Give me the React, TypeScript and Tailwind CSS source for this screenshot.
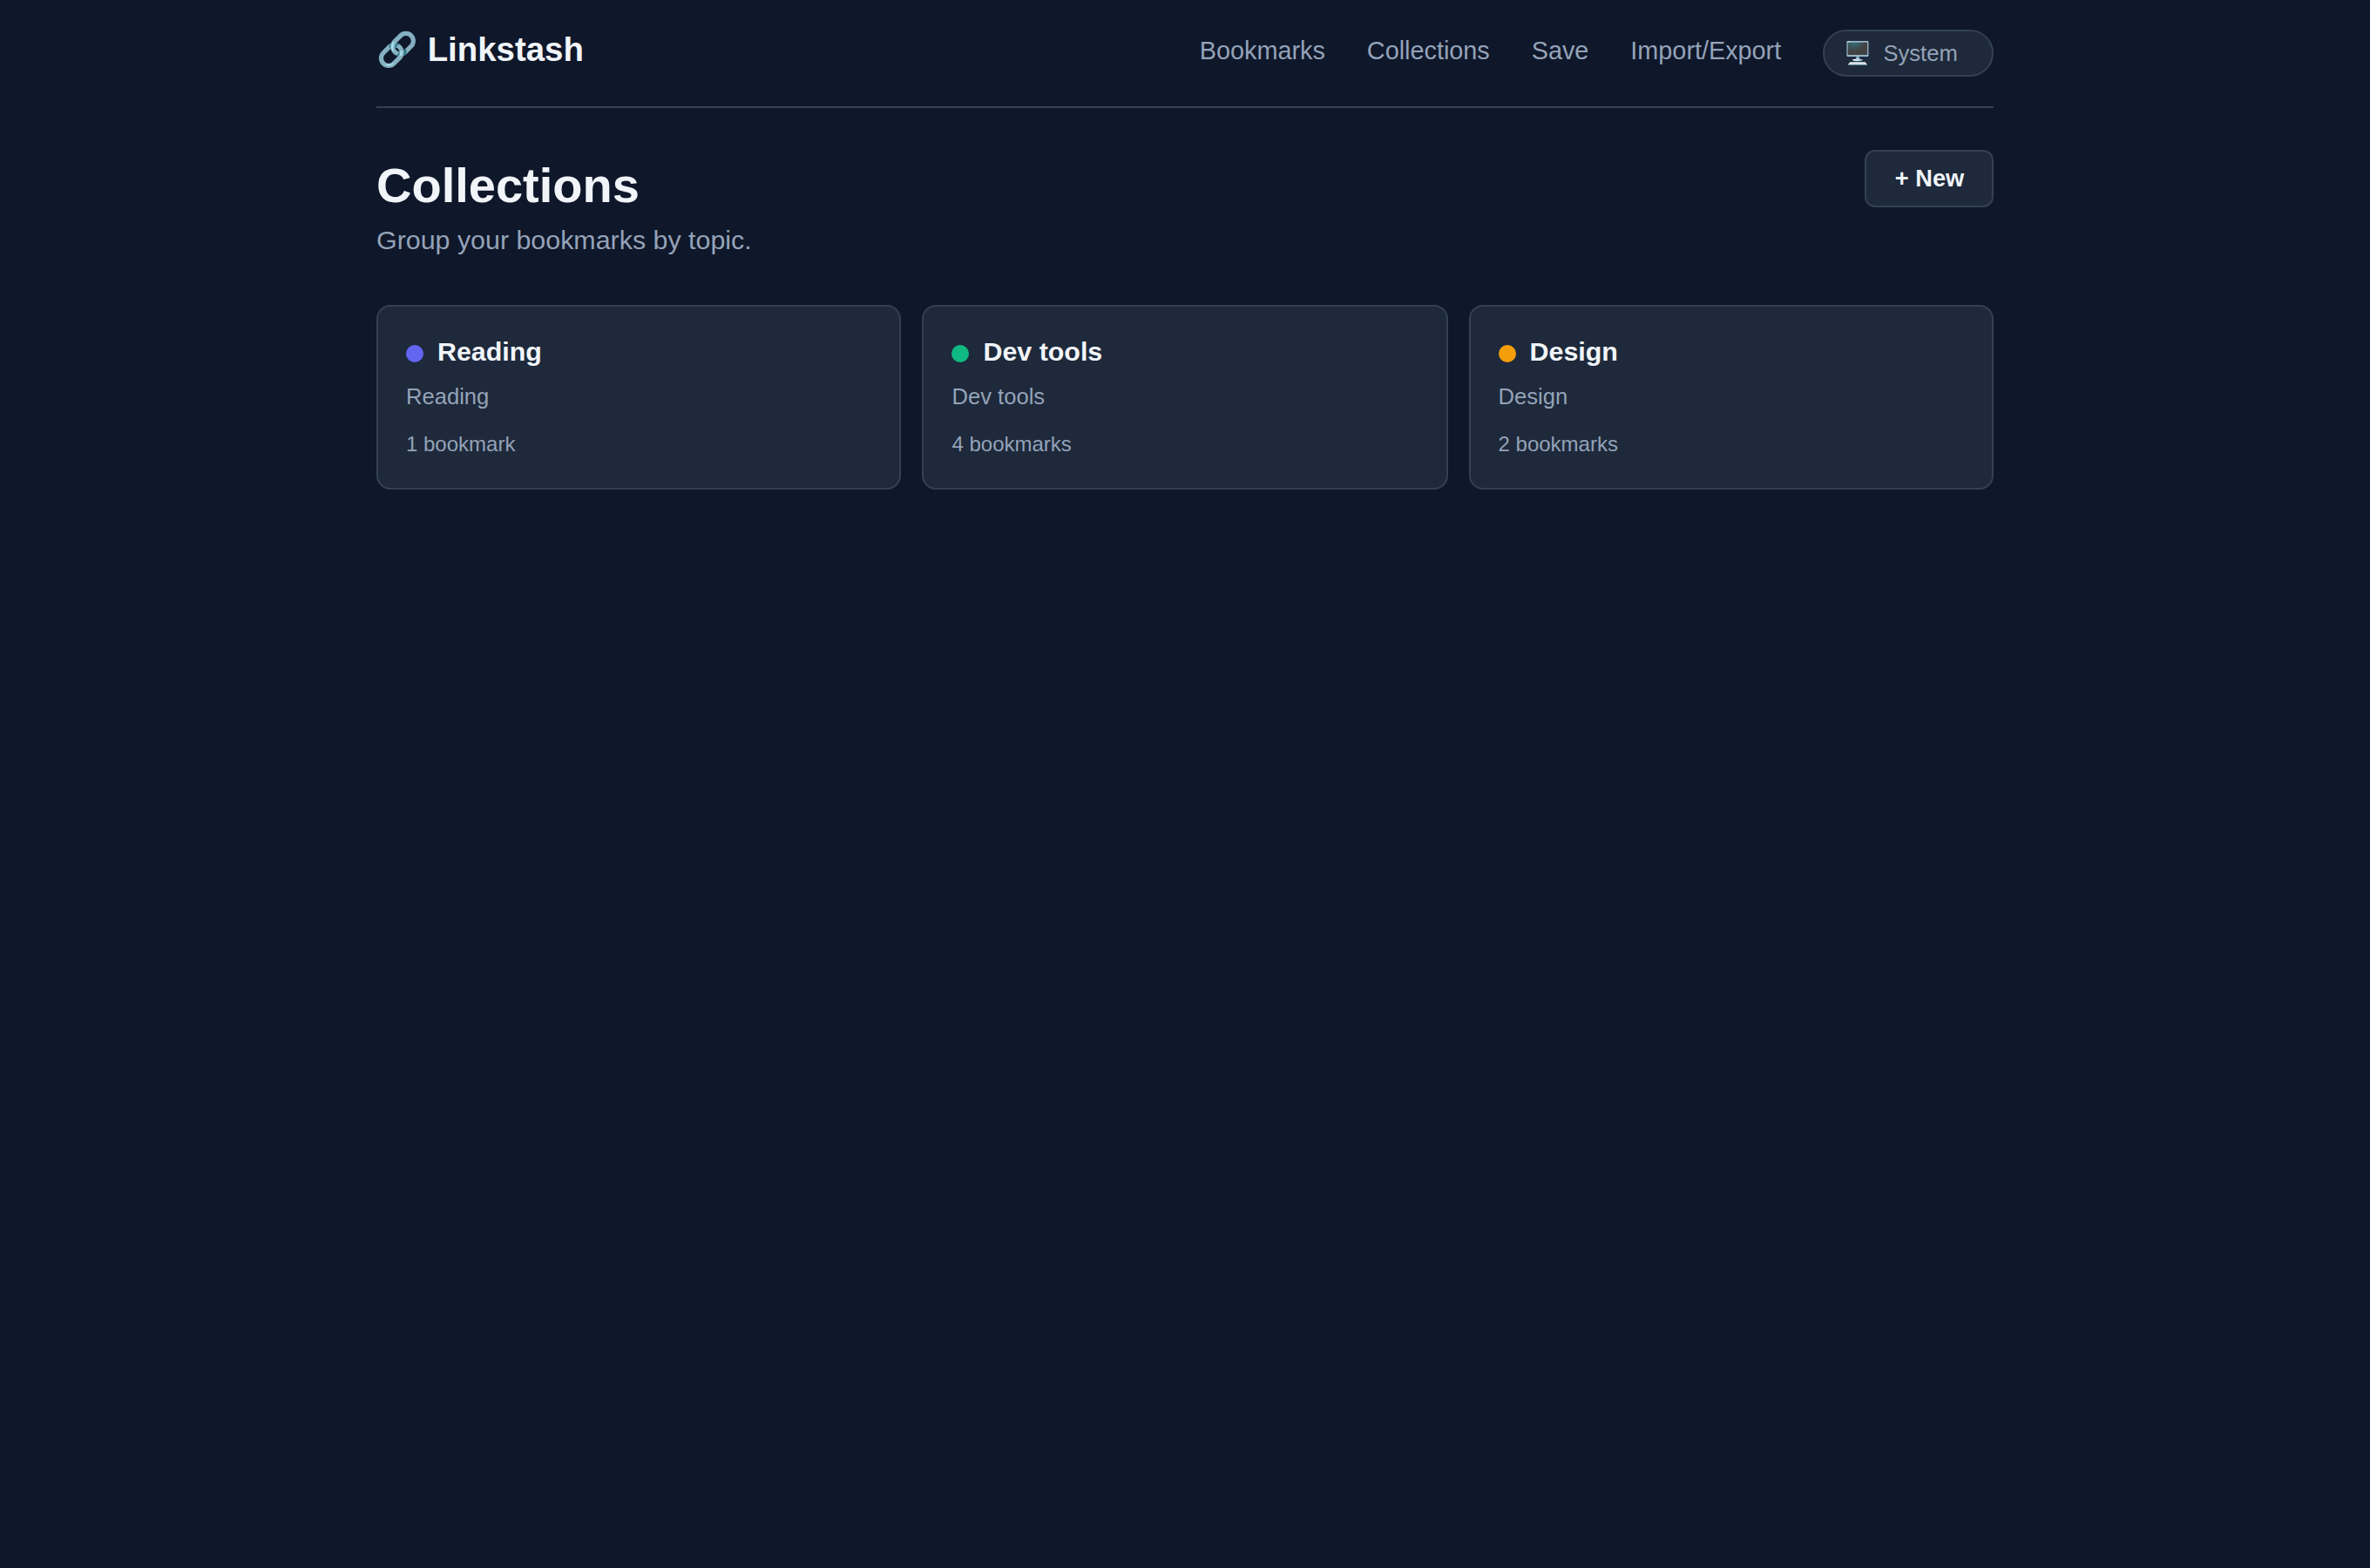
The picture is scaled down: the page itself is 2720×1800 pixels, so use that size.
const links = ["Bookmarks", "Collections", "Save", "Import/Export"];

const collections = [
  { name: "Reading", description: "Reading", count: 1, dot: "bg-[#6366f1]", inset: "pl-8" },
  { name: "Dev tools", description: "Dev tools", count: 4, dot: "bg-[#10b981]", inset: "pl-[32.45px]" },
  { name: "Design", description: "Design", count: 2, dot: "bg-[#f59e0b]", inset: "pl-[31.55px]" },
];

const Header = () => (
  <header className="flex items-start justify-between pt-8 h-31 border-b-2 border-[#334155]">
    <a href="#" className="text-[38.4px] leading-[50px] font-bold whitespace-nowrap">
      🔗 Linkstash
    </a>
    <nav className="flex items-start gap-12 text-[28.8px] leading-[52px] text-[#94a3b8]">
      {links.map((link) => (
        <a key={link} href="#">
          {link}
        </a>
      ))}
      <button className="flex gap-[13.2px] mt-0.5 w-[195.8px] h-[54px] pl-[22px] text-[25.6px] leading-[50px] rounded-full border-2 border-[#334155] bg-[#1e293b]">
        <span>🖥️</span>
        <span>System</span>
      </button>
    </nav>
  </header>
);

const CollectionCard = ({ name, description, count, dot, inset }: (typeof collections)[number]) => (
  <a
    href="#"
    className={`block py-8 pr-8 ${inset} rounded-2xl border-2 border-[#334155] bg-[#1e293b]`}
  >
    <h2 className="flex items-center gap-4 text-[30.4px] leading-[39px] font-bold">
      <span className={`size-5 mt-[5px] rounded-full ${dot}`} />
      {name}
    </h2>
    <p className="mt-[13px] text-[25.6px] leading-[38px] text-[#94a3b8]">{description}</p>
    <p className="mt-[18px] text-2xl leading-9 text-[#94a3b8]">
      {`${count} ${count === 1 ? "bookmark" : "bookmarks"}`}
    </p>
  </a>
);

export default function App() {
  return (
    <div className="min-h-screen bg-[#0f172a] text-[#f1f5f9] font-['Liberation_Sans',sans-serif]">
      <div className="w-[1856px] mx-auto">
        <Header />
        <main className="pt-12">
          <div className="flex items-start justify-between">
            <div>
              <h1 className="text-[56px] leading-[81px] font-bold">Collections</h1>
              <p className="text-[30.4px] leading-[45px] text-[#94a3b8]">
                Group your bookmarks by topic.
              </p>
            </div>
            <button className="w-[148px] pl-px text-[27.2px] leading-[62px] font-bold rounded-xl border-2 border-[#334155] bg-[#1e293b]">
              + New
            </button>
          </div>
          <div className="mt-13 grid grid-cols-[602px_604px_602px] gap-6">
            {collections.map((collection) => (
              <CollectionCard key={collection.name} {...collection} />
            ))}
          </div>
        </main>
      </div>
    </div>
  );
}
